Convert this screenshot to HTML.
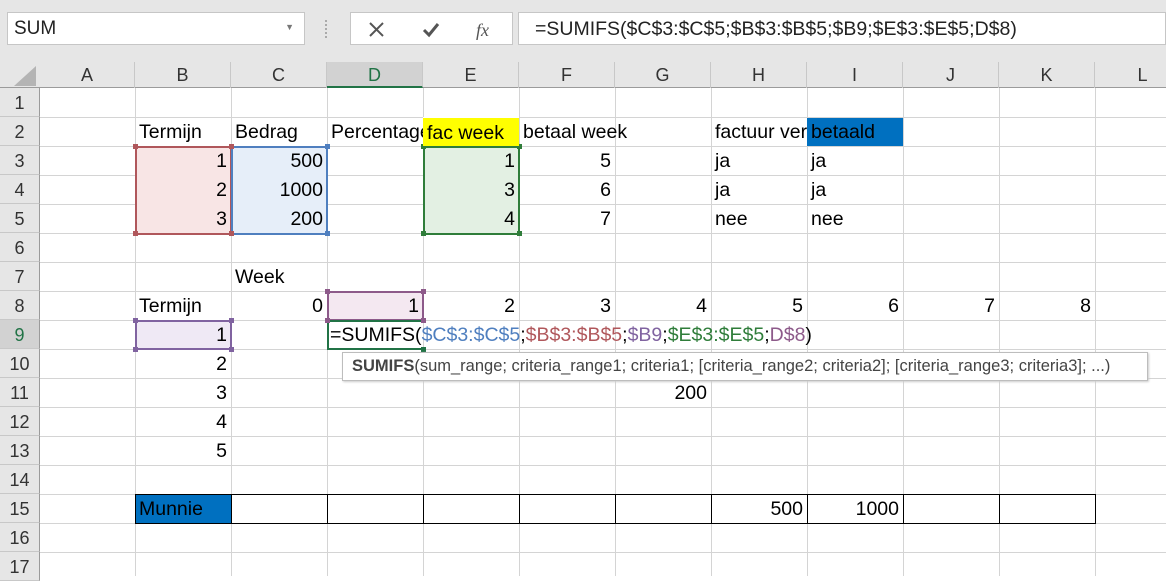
<!DOCTYPE html>
<html><head><meta charset="utf-8"><style>
*{margin:0;padding:0;box-sizing:border-box}
body{width:1166px;height:576px;overflow:hidden;background:#fff;font-family:"Liberation Sans",sans-serif;position:relative}
.top{position:absolute;left:0;top:0;width:1166px;height:62px;background:#e6e6e6}
.box{position:absolute;background:#fff;border:1px solid #c6c6c6;top:12px;height:33px}
.colh{position:absolute;top:62px;height:26px;background:#e6e6e6;border-bottom:1px solid #9b9b9b}
.ch{position:absolute;top:62px;height:26px;line-height:27px;text-align:center;font-size:18px;color:#333;border-right:1px solid #c8c8c8}
.rh{position:absolute;left:0;width:40px;height:29px;line-height:30px;text-align:center;font-size:18px;color:#333;background:#e6e6e6;border-bottom:1px solid #c8c8c8;border-right:1px solid #9b9b9b}
.c{position:absolute;height:29px;line-height:30px;font-size:19.5px;color:#000;padding:0 4px;white-space:nowrap;overflow:visible}
.r{text-align:right}
.vl{position:absolute;top:88px;width:1px;height:488px;background:#d4d4d4}
.hl{position:absolute;left:40px;width:1126px;height:1px;background:#d4d4d4}
.rng{position:absolute}
.h{position:absolute;width:5px;height:5px}
</style></head><body>
<div class="top"></div>
<div class="box" style="left:7px;width:298px"><span style="position:absolute;left:6px;top:5px;font-size:19px;color:#222">SUM</span><span style="position:absolute;right:10px;top:9px;font-size:9px;color:#777">▼</span></div>
<div style="position:absolute;left:325px;top:20px;width:2px;height:18px;border-left:2px dotted #aaa"></div>
<div class="box" style="left:350px;width:163px">
<svg width="163" height="33" style="position:absolute;left:0;top:0"><path d="M19 10l13 13M32 10l-13 13" stroke="#555" stroke-width="2"/><path d="M73 17l5 5 9-11" stroke="#555" stroke-width="3" fill="none"/><text x="125" y="23" font-family="Liberation Serif" font-style="italic" font-size="18" fill="#555">fx</text></svg></div>
<div class="box" style="left:518px;width:648px"><span style="position:absolute;left:16px;top:5px;font-size:19.5px;color:#222">=SUMIFS($C$3:$C$5;$B$3:$B$5;$B9;$E$3:$E$5;D$8)</span></div>
<div class="colh" style="left:0;width:1166px"></div>
<svg style="position:absolute;left:14px;top:66px" width="22" height="20"><path d="M22 0V20H0z" fill="#b4b4b4"/></svg>
<div class="ch" style="left:40px;width:95px">A</div>
<div class="ch" style="left:135px;width:96px">B</div>
<div class="ch" style="left:231px;width:96px">C</div>
<div class="ch" style="left:327px;width:96px;background:#d2d2d2;color:#217346;border-bottom:2px solid #217346;height:26px">D</div>
<div class="ch" style="left:423px;width:96px">E</div>
<div class="ch" style="left:519px;width:96px">F</div>
<div class="ch" style="left:615px;width:96px">G</div>
<div class="ch" style="left:711px;width:96px">H</div>
<div class="ch" style="left:807px;width:96px">I</div>
<div class="ch" style="left:903px;width:96px">J</div>
<div class="ch" style="left:999px;width:96px">K</div>
<div class="ch" style="left:1095px;width:96px">L</div>
<div class="vl" style="left:135px"></div><div class="vl" style="left:231px"></div><div class="vl" style="left:327px"></div><div class="vl" style="left:423px"></div><div class="vl" style="left:519px"></div><div class="vl" style="left:615px"></div><div class="vl" style="left:711px"></div><div class="vl" style="left:807px"></div><div class="vl" style="left:903px"></div><div class="vl" style="left:999px"></div><div class="vl" style="left:1095px"></div>
<div class="hl" style="top:117px"></div><div class="hl" style="top:146px"></div><div class="hl" style="top:175px"></div><div class="hl" style="top:204px"></div><div class="hl" style="top:233px"></div><div class="hl" style="top:262px"></div><div class="hl" style="top:291px"></div><div class="hl" style="top:320px"></div><div class="hl" style="top:349px"></div><div class="hl" style="top:378px"></div><div class="hl" style="top:407px"></div><div class="hl" style="top:436px"></div><div class="hl" style="top:465px"></div><div class="hl" style="top:494px"></div><div class="hl" style="top:523px"></div><div class="hl" style="top:552px"></div>
<div class="rh" style="top:88px">1</div><div class="rh" style="top:117px">2</div><div class="rh" style="top:146px">3</div><div class="rh" style="top:175px">4</div><div class="rh" style="top:204px">5</div><div class="rh" style="top:233px">6</div><div class="rh" style="top:262px">7</div><div class="rh" style="top:291px">8</div><div class="rh" style="top:320px;background:#d2d2d2;color:#217346">9</div><div class="rh" style="top:349px">10</div><div class="rh" style="top:378px">11</div><div class="rh" style="top:407px">12</div><div class="rh" style="top:436px">13</div><div class="rh" style="top:465px">14</div><div class="rh" style="top:494px">15</div><div class="rh" style="top:523px">16</div><div class="rh" style="top:552px">17</div>
<div style="position:absolute;left:136px;top:147px;width:95px;height:87px;background:#f8e5e5"></div>
<div style="position:absolute;left:232px;top:147px;width:95px;height:87px;background:#e6eef9"></div>
<div style="position:absolute;left:424px;top:147px;width:95px;height:87px;background:#e3f0e3"></div>
<div style="position:absolute;left:328px;top:292px;width:95px;height:28px;background:#f4e8f1"></div>
<div style="position:absolute;left:136px;top:321px;width:95px;height:28px;background:#efe9f5"></div>
<div style="position:absolute;left:136px;top:495px;width:95px;height:28px;background:#0070c0"></div>
<div class="rng" style="left:135px;top:146px;width:97px;height:89px;border:2px solid #b0575b"></div>
<div class="rng" style="left:231px;top:146px;width:97px;height:89px;border:2px solid #4f7fbf"></div>
<div class="rng" style="left:423px;top:146px;width:97px;height:89px;border:2px solid #2f7d3a"></div>
<div class="rng" style="left:327px;top:291px;width:97px;height:30px;border:2px solid #8d5a8a"></div>
<div class="rng" style="left:135px;top:320px;width:97px;height:30px;border:2px solid #8063a0"></div>
<div class="rng" style="left:327px;top:320px;width:97px;height:30px;border:2px solid #217346;border-right:none"></div>
<div class="rng" style="left:135px;top:494px;width:961px;height:30px;border:1px solid #000"></div>
<div style="position:absolute;left:231px;top:494px;width:1px;height:30px;background:#000;box-shadow:96px 0 #000,192px 0 #000,288px 0 #000,384px 0 #000,480px 0 #000,576px 0 #000,672px 0 #000,768px 0 #000"></div>
<div class="h" style="left:133px;top:144px;background:#b0575b"></div><div class="h" style="left:229px;top:144px;background:#b0575b"></div><div class="h" style="left:133px;top:231px;background:#b0575b"></div><div class="h" style="left:229px;top:231px;background:#b0575b"></div>
<div class="h" style="left:325px;top:144px;background:#4f7fbf"></div><div class="h" style="left:325px;top:231px;background:#4f7fbf"></div>
<div class="h" style="left:421px;top:144px;background:#2f7d3a"></div><div class="h" style="left:517px;top:144px;background:#2f7d3a"></div><div class="h" style="left:421px;top:231px;background:#2f7d3a"></div><div class="h" style="left:517px;top:231px;background:#2f7d3a"></div>
<div class="h" style="left:325px;top:289px;background:#8d5a8a"></div><div class="h" style="left:421px;top:289px;background:#8d5a8a"></div><div class="h" style="left:325px;top:318px;background:#8d5a8a"></div><div class="h" style="left:421px;top:318px;background:#8d5a8a"></div>
<div class="h" style="left:133px;top:318px;background:#8063a0"></div><div class="h" style="left:229px;top:318px;background:#8063a0"></div><div class="h" style="left:133px;top:347px;background:#8063a0"></div><div class="h" style="left:229px;top:347px;background:#8063a0"></div>
<div class="h" style="left:421px;top:347px;background:#217346"></div>
<div class="c" style="left:135px;top:117px">Termijn</div>
<div class="c" style="left:231px;top:117px">Bedrag</div>
<div class="c" style="left:327px;top:117px;width:96px;overflow:hidden">Percentage</div>
<div class="c" style="left:423px;top:117px;width:96px;height:29px;background:#ffff00;border-top:1px solid #fff">fac week</div>
<div class="c" style="left:519px;top:117px">betaal week</div>
<div class="c" style="left:711px;top:117px;width:96px;overflow:hidden">factuur verstuurd</div>
<div class="c" style="left:807px;top:118px;width:96px;height:28px;background:#0070c0;line-height:29px">betaald</div>
<div class="c r" style="left:135px;top:146px;width:96px">1</div><div class="c r" style="left:231px;top:146px;width:96px">500</div><div class="c r" style="left:423px;top:146px;width:96px">1</div><div class="c r" style="left:519px;top:146px;width:96px">5</div><div class="c" style="left:711px;top:146px">ja</div><div class="c" style="left:807px;top:146px">ja</div>
<div class="c r" style="left:135px;top:175px;width:96px">2</div><div class="c r" style="left:231px;top:175px;width:96px">1000</div><div class="c r" style="left:423px;top:175px;width:96px">3</div><div class="c r" style="left:519px;top:175px;width:96px">6</div><div class="c" style="left:711px;top:175px">ja</div><div class="c" style="left:807px;top:175px">ja</div>
<div class="c r" style="left:135px;top:204px;width:96px">3</div><div class="c r" style="left:231px;top:204px;width:96px">200</div><div class="c r" style="left:423px;top:204px;width:96px">4</div><div class="c r" style="left:519px;top:204px;width:96px">7</div><div class="c" style="left:711px;top:204px">nee</div><div class="c" style="left:807px;top:204px">nee</div>
<div class="c" style="left:231px;top:262px">Week</div>
<div class="c" style="left:135px;top:291px">Termijn</div>
<div class="c r" style="left:231px;top:291px;width:96px">0</div><div class="c r" style="left:327px;top:291px;width:96px">1</div><div class="c r" style="left:423px;top:291px;width:96px">2</div><div class="c r" style="left:519px;top:291px;width:96px">3</div><div class="c r" style="left:615px;top:291px;width:96px">4</div><div class="c r" style="left:711px;top:291px;width:96px">5</div><div class="c r" style="left:807px;top:291px;width:96px">6</div><div class="c r" style="left:903px;top:291px;width:96px">7</div><div class="c r" style="left:999px;top:291px;width:96px">8</div>
<div class="c r" style="left:135px;top:320px;width:96px">1</div>
<div class="c" style="left:327px;top:320px;padding-left:3px">=SUMIFS(<span style="color:#4f7fbf">$C$3:$C$5</span>;<span style="color:#b0575b">$B$3:$B$5</span>;<span style="color:#8063a0">$B9</span>;<span style="color:#2f7d3a">$E$3:$E$5</span>;<span style="color:#8d5a8a">D$8</span>)</div>
<div class="c r" style="left:135px;top:349px;width:96px">2</div>
<div class="c r" style="left:135px;top:378px;width:96px">3</div>
<div class="c r" style="left:615px;top:378px;width:96px">200</div>
<div class="c r" style="left:135px;top:407px;width:96px">4</div>
<div class="c r" style="left:135px;top:436px;width:96px">5</div>
<div class="c" style="left:135px;top:494px">Munnie</div>
<div class="c r" style="left:711px;top:494px;width:96px">500</div>
<div class="c r" style="left:807px;top:494px;width:96px">1000</div>
<div style="position:absolute;left:342px;top:352px;width:806px;height:29px;background:#fff;border:1px solid #bdbdbd;box-shadow:1px 1px 2px #ccc;font-size:16.5px;line-height:27px;padding-left:9px;color:#444;white-space:nowrap"><b>SUMIFS</b>(sum_range; criteria_range1; criteria1; [criteria_range2; criteria2]; [criteria_range3; criteria3]; ...)</div>
</body></html>
